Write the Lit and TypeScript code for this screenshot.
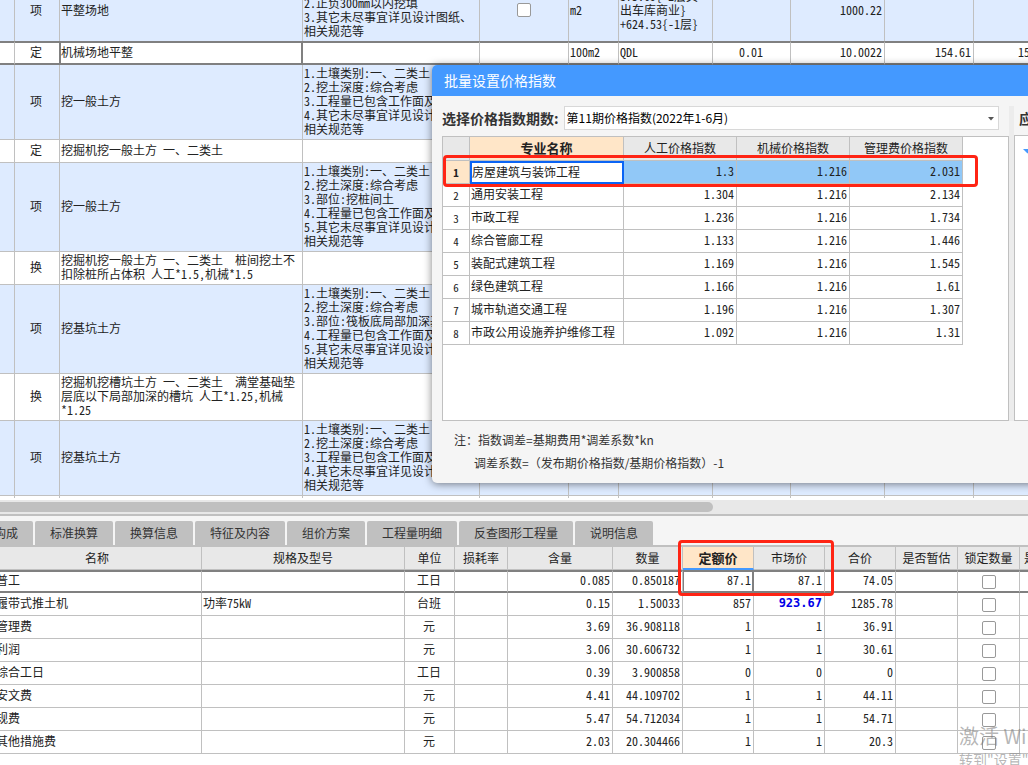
import { LitElement, html, css } from "lit";
import { customElement, state } from "lit/decorators.js";
import { classMap } from "lit/directives/class-map.js";

interface Item {
  kind: string;
  name: string;
  desc?: string[];
  current?: boolean;
  check?: boolean;
  unit?: string;
  expr?: string[];
  rate?: string;
  qty?: string;
  price?: string;
  total?: string;
}

const ITEMS: Item[] = [
  {
    kind: "项", name: "平整场地",
    desc: ["1.土壤类别:一、二类土", "2.正负300mm以内挖填", "3.其它未尽事宜详见设计图纸、", "相关规范等"],
    check: true, unit: "m2", expr: ["375.69{-1层其", "出车库商业}", "+624.53{-1层}"], qty: "1000.22",
  },
  { kind: "定", name: "机械场地平整", current: true, unit: "100m2", expr: ["QDL"], rate: "0.01", qty: "10.0022", price: "154.61", total: "1546.44" },
  {
    kind: "项", name: "挖一般土方",
    desc: ["1.土壤类别:一、二类土", "2.挖土深度:综合考虑", "3.工程量已包含工作面及放坡", "4.其它未尽事宜详见设计图纸、", "相关规范等"],
  },
  { kind: "定", name: "挖掘机挖一般土方 一、二类土" },
  {
    kind: "项", name: "挖一般土方",
    desc: ["1.土壤类别:一、二类土", "2.挖土深度:综合考虑", "3.部位:挖桩间土", "4.工程量已包含工作面及放坡", "5.其它未尽事宜详见设计图纸、", "相关规范等"],
  },
  { kind: "换", name: "挖掘机挖一般土方 一、二类土  桩间挖土不扣除桩所占体积 人工*1.5,机械*1.5" },
  {
    kind: "项", name: "挖基坑土方",
    desc: ["1.土壤类别:一、二类土", "2.挖土深度:综合考虑", "3.部位:筏板底局部加深基坑", "4.工程量已包含工作面及放坡", "5.其它未尽事宜详见设计图纸、", "相关规范等"],
  },
  { kind: "换", name: "挖掘机挖槽坑土方 一、二类土  满堂基础垫层底以下局部加深的槽坑 人工*1.25,机械*1.25" },
  {
    kind: "项", name: "挖基坑土方",
    desc: ["1.土壤类别:一、二类土", "2.挖土深度:综合考虑", "3.工程量已包含工作面及放坡", "4.其它未尽事宜详见设计图纸、", "相关规范等"],
  },
];

const TABS = ["构成", "标准换算", "换算信息", "特征及内容", "组价方案", "工程量明细", "反查图形工程量", "说明信息"];
const RES_HEAD = ["名称", "规格及型号", "单位", "损耗率", "含量", "数量", "定额价", "市场价", "合价", "是否暂估", "锁定数量", "是否计价"];
const RESOURCES = [
  ["普工", "", "工日", "0.085", "0.850187", "87.1", "87.1", "74.05"],
  ["履带式推土机", "功率75kW", "台班", "0.15", "1.50033", "857", "923.67", "1285.78"],
  ["管理费", "", "元", "3.69", "36.908118", "1", "1", "36.91"],
  ["利润", "", "元", "3.06", "30.606732", "1", "1", "30.61"],
  ["综合工日", "", "工日", "0.39", "3.900858", "0", "0", "0"],
  ["安文费", "", "元", "4.41", "44.109702", "1", "1", "44.11"],
  ["规费", "", "元", "5.47", "54.712034", "1", "1", "54.71"],
  ["其他措施费", "", "元", "2.03", "20.304466", "1", "1", "20.3"],
];

const INDEXES = [
  ["房屋建筑与装饰工程", "1.3", "1.216", "2.031"],
  ["通用安装工程", "1.304", "1.216", "2.134"],
  ["市政工程", "1.236", "1.216", "1.734"],
  ["综合管廊工程", "1.133", "1.216", "1.446"],
  ["装配式建筑工程", "1.169", "1.216", "1.545"],
  ["绿色建筑工程", "1.166", "1.216", "1.61"],
  ["城市轨道交通工程", "1.196", "1.216", "1.307"],
  ["市政公用设施养护维修工程", "1.092", "1.216", "1.31"],
];

const gridStyles = css`
  * { box-sizing: border-box; }
  table {
    border-collapse: separate;
    border-spacing: 0;
    table-layout: fixed;
    font: 12px/14px "Noto Sans Mono CJK SC", "Noto Sans CJK SC", monospace;
    color: #222;
  }
  th, td {
    padding: 0 2px 2px 1px;
    border: 0 solid #c0c0c0;
    border-right-width: 1px;
    border-bottom-width: 1px;
    overflow: hidden;
    text-align: left;
    vertical-align: middle;
    white-space: pre-wrap;
    background: #fff;
  }
  th { padding: 0 2px; font-weight: 400; text-align: center; background: #e8e8e8; white-space: nowrap; }
  .num { text-align: right; white-space: nowrap; }
  .mid { text-align: center; }
  input[type="checkbox"] {
    appearance: none;
    display: block;
    width: 14px;
    height: 14px;
    margin: 0 auto;
    border: 1px solid #999;
    border-radius: 2px;
    background: #fff;
  }
`;

@customElement("item-grid")
export class ItemGrid extends LitElement {
  static styles = [gridStyles, css`
    :host { display: block; overflow: hidden; padding-bottom: 2px; background: #fff; }
    table { width: 100%; min-width: 1063px; margin-top: -20px; }
    .c0 { width: 15px; } .c1 { width: 45px; } .c2 { width: 243px; } .c3 { width: 177px; }
    .c4 { width: 89px; } .c5 { width: 50px; } .c6 { width: 94px; } .c7 { width: 78px; }
    .c8 { width: 94px; } .c9 { width: 89px; }
    td { height: 23px; padding: 1px 2px 3px 1px; }
    .bill td { background: #deebff; }
    .before td { height: 61px; border-bottom: 0; }
    .current td { height: 24px; border-top: 2px solid #808080; border-bottom: 2px solid #808080; padding-top: 0; padding-bottom: 2px; }
    .current .name { border-right: 2px solid #808080; box-shadow: inset 1px 0 #808080; }
    .current .kind { border-right: 1px solid #808080; }
    td.kind { padding-right: 3px; }
    .next td { height: 2px; padding: 0; border-bottom: 0; }
  `];

  render() {
    return html`<table>
      <colgroup>${[0, 1, 2, 3, 4, 5, 6, 7, 8, 9, 10].map((i) => html`<col class="c${i}">`)}</colgroup>
      <tbody>
        ${ITEMS.map((r, i) => html`<tr class=${classMap({ bill: r.kind === "项", current: !!r.current, before: i === 0 })}>
          <td></td>
          <td class="mid kind">${r.kind}</td>
          <td class="name">${r.name}</td>
          <td>${(r.desc ?? []).join("\n")}</td>
          <td>${r.check ? html`<input type="checkbox" aria-label="锁定综合单价">` : ""}</td>
          <td>${r.unit ?? ""}</td>
          <td>${(r.expr ?? []).join("\n")}</td>
          <td class="mid">${r.rate ?? ""}</td>
          <td class="num">${r.qty ?? ""}</td>
          <td class="num">${r.price ?? ""}</td>
          <td class="num">${r.total ?? ""}</td>
        </tr>`)}
        <tr class="next">${[0, 1, 2, 3, 4, 5, 6, 7, 8, 9, 10].map(() => html`<td></td>`)}</tr>
      </tbody>
    </table>`;
  }
}

@customElement("resource-grid")
export class ResourceGrid extends LitElement {
  static styles = [gridStyles, css`
    :host { display: block; overflow: hidden; background: #fff; }
    .wrap { margin-left: -7px; }
    table { width: 100%; min-width: 1089px; }
    .c0 { width: 209px; } .c1 { width: 203px; } .c2 { width: 50px; } .c3 { width: 53px; }
    .c4 { width: 105px; } .c5 { width: 70px; } .c6, .c7, .c8 { width: 71px; }
    .c9, .c10 { width: 62px; }
    th { height: 23px; }
    .last { text-align: left; padding-left: 4px; }
    .sel { background: #ffe6c8; font-weight: 700; font-size: 13px; border-bottom: 2px solid #4499ff; }
    td { height: 23px; }
    td:first-child { padding-left: 3px; }
    .check { padding: 1px 1px 0; }
    .current td { border-top: 2px solid #808080; border-bottom: 2px solid #808080; padding-bottom: 3px; }
    .current .check { padding: 0 1px; }
    .current .cell { border-right: 2px solid #808080; box-shadow: inset 1px 0 #808080; padding-right: 1px; }
    .changed { color: #0000e8; font-weight: 700; font-family: "DejaVu Sans Mono", monospace; }
  `];

  render() {
    return html`<div class="wrap"><table>
      <colgroup>${RES_HEAD.map((_, i) => html`<col class="c${i}">`)}</colgroup>
      <thead><tr>${RES_HEAD.map((h, i) => html`<th scope="col" class=${classMap({ sel: i === 6, last: i === 11 })}>${h}</th>`)}</tr></thead>
      <tbody>${RESOURCES.map((r, ri) => html`<tr class=${classMap({ current: ri === 0 })}>
        ${r.map((v, i) => html`<td class=${classMap({
          mid: i === 2,
          num: i > 2,
          cell: i === 5,
          changed: v === "923.67",
        })}>${v}</td>${i === 2 ? html`<td></td>` : ""}`)}
        <td></td>
        <td class="check"><input type="checkbox" aria-label="锁定数量 ${r[0]}"></td>
        <td></td>
      </tr>`)}</tbody>
    </table></div>`;
  }
}

@customElement("index-dialog")
export class IndexDialog extends LitElement {
  static styles = [gridStyles, css`
    :host {
      display: block;
      border-radius: 5px 0 0 5px;
      overflow: hidden;
      background: #f5f5f5;
      font: 12px/18px "Noto Sans CJK SC", sans-serif;
      color: #333;
    }
    h2 { margin: 0; padding: 0 12px; background: #4499ff; color: #fff; font: 400 14px/31px "Noto Sans CJK SC", sans-serif; }
    .body { display: flex; padding: 10px 0 0 10px; }
    .left { flex: 1; min-width: 0; }
    .pick { display: flex; align-items: center; gap: 5px; height: 24px; margin-right: 10px; }
    label, .side-title { font-weight: 700; font-size: 14px; line-height: 24px; white-space: nowrap; }
    .combo { position: relative; flex: 1; height: 24px; }
    select {
      appearance: none;
      display: block;
      width: 100%;
      height: 24px;
      padding: 0 2px;
      border: 1px solid #d8d8d8;
      border-radius: 0;
      background: #fff;
      color: #000;
      font: 12px/18px "Noto Sans CJK SC", sans-serif;
    }
    .combo svg { position: absolute; right: 5px; top: 11px; pointer-events: none; }
    .panel { height: 285px; margin-top: 6px; border: 1px solid #c0c0c0; background: #fff; }
    .split { width: 5px; background: #ececec; }
    .side { width: 180px; }
    .side-title { padding-left: 5px; }
    .side .panel { margin-top: 5px; height: 286px; padding: 13px 0 0 8px; }
    .side svg { display: block; }
    .c0 { width: 27px; } .c1 { width: 154px; } .c2, .c3, .c4 { width: 113px; }
    table { width: 520px; }
    thead th { height: 24px; padding-bottom: 2px; }
    thead .sel { background: #ffe6c8; font-weight: 700; font-size: 13px; }
    tbody th { height: 23px; background: #fff; font-size: 11px; }
    td { height: 23px; }
    .hit th { background: #ffe6c8; font-weight: 700; }
    .hit td { background: #91c8f7; }
    .hit .cur { background: #fff; border: 2px solid #0a64f5; padding: 0 0 2px; }
    .notes { padding: 7px 22px 9px; }
    .notes p { margin: 0; line-height: 23px; }
    .notes .deep { padding-left: 20px; }
  `];

  render() {
    return html`
      <h2>批量设置价格指数</h2>
      <div class="body">
        <div class="left">
          <div class="pick">
            <label for="period">选择价格指数期数:</label>
            <div class="combo">
              <select id="period"><option>第11期价格指数(2022年1-6月)</option></select>
              <svg width="6" height="4" viewBox="0 0 6 4"><path d="M0 0h6L3 3.5z" fill="#555"/></svg>
            </div>
          </div>
          <div class="panel">
            <table>
              <colgroup>${[0, 1, 2, 3, 4].map((i) => html`<col class="c${i}">`)}</colgroup>
              <thead><tr><th></th><th scope="col" class="sel">专业名称</th><th scope="col">人工价格指数</th><th scope="col">机械价格指数</th><th scope="col">管理费价格指数</th></tr></thead>
              <tbody>${INDEXES.map((r, i) => html`<tr class=${classMap({ hit: i === 0 })}>
                <th scope="row">${i + 1}</th>
                ${r.map((v, c) => html`<td class=${classMap({ num: c > 0, cur: c === 0 })}>${v}</td>`)}
              </tr>`)}</tbody>
            </table>
          </div>
        </div>
        <div class="split"></div>
        <div class="side">
          <div class="side-title">应用范围</div>
          <div class="panel"><svg width="9" height="5" viewBox="0 0 9 5"><path d="M0 0h9L4.5 4.5z" fill="#4499ff"/></svg></div>
        </div>
      </div>
      <div class="notes">
        <p>注：指数调差=基期费用*调差系数*kn</p>
        <p class="deep">调差系数=（发布期价格指数/基期价格指数）-1</p>
      </div>`;
  }
}

@customElement("app-root")
export class AppRoot extends LitElement {
  @state() private tab = 0;

  static styles = css`
    * { box-sizing: border-box; }
    :host {
      display: flex;
      flex-direction: column;
      position: relative;
      min-height: 100vh;
      overflow: hidden;
      background: #fff;
      font: 12px/18px "Noto Sans CJK SC", sans-serif;
      color: #333;
    }
    .track { height: 14px; padding: 2px 0; background: #e8e8e8; }
    .thumb { width: 713px; height: 10px; border-radius: 0 5px 5px 0; background: #c0c0c0; }
    .tabs {
      display: flex;
      gap: 2px;
      padding-top: 5px;
      border-top: 2px solid #c0c0c0;
      border-bottom: 2px solid #c0c0c0;
      background: #f5f5f5;
    }
    .tabs button {
      flex: none;
      height: 24px;
      padding: 0 15px;
      border: 0;
      border-radius: 2px 2px 0 0;
      background: #c0c0c0;
      color: #333;
      font: 12px/24px "Noto Sans CJK SC", sans-serif;
    }
    .tabs button:first-child { margin-left: -21px; }
    index-dialog {
      position: absolute;
      left: 432px;
      right: -166px;
      top: 65px;
      box-shadow: 0 1px 9px rgba(0, 0, 0, 0.5);
    }
    .mark {
      position: absolute;
      border: 3px solid #ff2414;
      border-radius: 4px;
      pointer-events: none;
    }
    .mark-index { left: 443px; top: 155px; width: 535px; height: 32px; }
    .mark-price { left: 678px; top: 540px; width: 156px; height: 56px; }
    .watermark {
      position: absolute;
      left: 959px;
      top: 723px;
      color: rgba(120, 120, 120, 0.55);
      font-size: 14px;
      line-height: 20px;
      white-space: nowrap;
      pointer-events: none;
    }
    .watermark strong { display: block; font-weight: 400; font-size: 20px; line-height: 26px; }
  `;

  render() {
    return html`
      <item-grid></item-grid>
      <div class="track"><div class="thumb"></div></div>
      <div class="tabs" role="tablist">
        ${TABS.map((t, i) => html`<button role="tab" aria-selected=${this.tab === i} @click=${() => (this.tab = i)}>${t}</button>`)}
      </div>
      <resource-grid></resource-grid>
      <index-dialog role="dialog" aria-label="批量设置价格指数"></index-dialog>
      <div class="mark mark-index"></div>
      <div class="mark mark-price"></div>
      <div class="watermark"><strong>激活 Windows</strong>转到"设置"以激活 Windows。</div>
    `;
  }
}
